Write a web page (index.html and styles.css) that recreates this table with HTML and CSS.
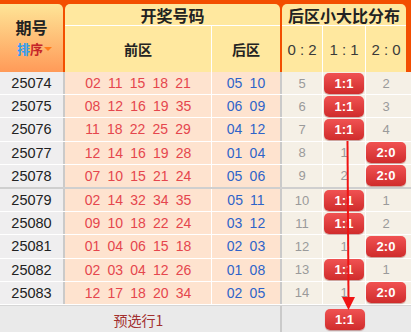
FILE: index.html
```html
<!DOCTYPE html>
<html lang="zh-CN">
<head>
<meta charset="utf-8">
<title>后区小大比分布</title>
<link rel="stylesheet" href="styles.css">
</head>
<body>
<div class="board">
  <div class="head">
    <div class="h-issue">
      <div class="h-issue-title">期号</div>
      <div class="sort"><span class="s-blue">排</span><span class="s-red">序</span><span class="tri"></span></div>
    </div>
    <div class="h-group g-draw">
      <div class="h-title">开奖号码</div>
      <div class="h-sub">
        <div class="h-front">前区</div>
        <div class="h-back">后区</div>
      </div>
    </div>
    <div class="h-group g-dist">
      <div class="h-title">后区小大比分布</div>
      <div class="h-sub">
        <div class="h-d1">0 : 2</div>
        <div class="h-d2">1 : 1</div>
        <div class="h-d3">2 : 0</div>
      </div>
    </div>
  </div>

  <div class="row">
    <div class="c-issue">25074</div>
    <div class="c-front"><span>02</span><span>11</span><span>15</span><span>18</span><span>21</span></div>
    <div class="c-back"><span>05</span><span>10</span></div>
    <div class="c-d1">5</div>
    <div class="c-d2"><span class="badge">1:1</span></div>
    <div class="c-d3">2</div>
  </div>
  <div class="row">
    <div class="c-issue">25075</div>
    <div class="c-front"><span>08</span><span>12</span><span>16</span><span>19</span><span>35</span></div>
    <div class="c-back"><span>06</span><span>09</span></div>
    <div class="c-d1">6</div>
    <div class="c-d2"><span class="badge">1:1</span></div>
    <div class="c-d3">3</div>
  </div>
  <div class="row">
    <div class="c-issue">25076</div>
    <div class="c-front"><span>11</span><span>18</span><span>22</span><span>25</span><span>29</span></div>
    <div class="c-back"><span>04</span><span>12</span></div>
    <div class="c-d1">7</div>
    <div class="c-d2"><span class="badge">1:1</span></div>
    <div class="c-d3">4</div>
  </div>
  <div class="row">
    <div class="c-issue">25077</div>
    <div class="c-front"><span>12</span><span>14</span><span>16</span><span>19</span><span>28</span></div>
    <div class="c-back"><span>01</span><span>04</span></div>
    <div class="c-d1">8</div>
    <div class="c-d2">1</div>
    <div class="c-d3"><span class="badge">2:0</span></div>
  </div>
  <div class="row row-split">
    <div class="c-issue">25078</div>
    <div class="c-front"><span>07</span><span>10</span><span>15</span><span>21</span><span>24</span></div>
    <div class="c-back"><span>05</span><span>06</span></div>
    <div class="c-d1">9</div>
    <div class="c-d2">2</div>
    <div class="c-d3"><span class="badge">2:0</span></div>
  </div>
  <div class="row">
    <div class="c-issue">25079</div>
    <div class="c-front"><span>02</span><span>14</span><span>32</span><span>34</span><span>35</span></div>
    <div class="c-back"><span>05</span><span>11</span></div>
    <div class="c-d1">10</div>
    <div class="c-d2"><span class="badge">1:1</span></div>
    <div class="c-d3">1</div>
  </div>
  <div class="row">
    <div class="c-issue">25080</div>
    <div class="c-front"><span>09</span><span>10</span><span>18</span><span>22</span><span>24</span></div>
    <div class="c-back"><span>03</span><span>12</span></div>
    <div class="c-d1">11</div>
    <div class="c-d2"><span class="badge">1:1</span></div>
    <div class="c-d3">2</div>
  </div>
  <div class="row">
    <div class="c-issue">25081</div>
    <div class="c-front"><span>01</span><span>04</span><span>06</span><span>15</span><span>18</span></div>
    <div class="c-back"><span>02</span><span>03</span></div>
    <div class="c-d1">12</div>
    <div class="c-d2">1</div>
    <div class="c-d3"><span class="badge">2:0</span></div>
  </div>
  <div class="row">
    <div class="c-issue">25082</div>
    <div class="c-front"><span>02</span><span>03</span><span>04</span><span>12</span><span>26</span></div>
    <div class="c-back"><span>01</span><span>08</span></div>
    <div class="c-d1">13</div>
    <div class="c-d2"><span class="badge">1:1</span></div>
    <div class="c-d3">1</div>
  </div>
  <div class="row row-last">
    <div class="c-issue">25083</div>
    <div class="c-front"><span>12</span><span>17</span><span>18</span><span>20</span><span>34</span></div>
    <div class="c-back"><span>02</span><span>05</span></div>
    <div class="c-d1">14</div>
    <div class="c-d2">1</div>
    <div class="c-d3"><span class="badge">2:0</span></div>
  </div>

  <div class="foot">
    <div class="f-issue"></div>
    <div class="f-front">预选行1</div>
    <div class="f-back"></div>
    <div class="f-d1"></div>
    <div class="f-d2"><span class="badge">1:1</span></div>
    <div class="f-d3"></div>
  </div>

  <svg class="trend" width="411" height="332" viewBox="0 0 411 332">
    <line x1="347.5" y1="141" x2="348.5" y2="300" stroke="#f01414" stroke-width="2"/>
    <polygon points="342,297 355,297 348.5,310" fill="#f01414"/>
  </svg>
</div>
</body>
</html>
```

FILE: styles.css
```css
* { box-sizing: border-box; }

html, body {
  margin: 0;
  padding: 0;
  background: #eaeaea;
}

body {
  font-family: "Liberation Sans", Arial, "Noto Sans CJK SC", sans-serif;
  width: 411px;
  height: 332px;
  overflow: hidden;
}

.board {
  position: relative;
  width: 411px;
}

/* ---------- header ---------- */
.head {
  display: flex;
  gap: 2px;
  height: 72px;
  padding: 4px 5px 0 0;
  background: #f34e00;
}

.h-issue {
  width: 63px;
  border-radius: 0 5px 0 0;
  background: linear-gradient(#fee597, #ff9a58);
  display: flex;
  flex-direction: column;
  align-items: center;
  justify-content: flex-start;
  padding-top: 11px;
  font-family: "Noto Sans CJK SC", sans-serif;
  font-weight: bold;
}

.h-issue-title {
  font-size: 16px;
  line-height: 24px;
  height: 24px;
  color: #222;
}

.sort {
  display: flex;
  align-items: center;
  height: 20px;
  font-size: 13px;
  line-height: 20px;
  padding-left: 6px;
}

.s-blue { color: #2c9cf2; }
.s-red { color: #c52429; }

.tri {
  width: 0;
  height: 0;
  margin-left: 1px;
  border-left: 4px solid transparent;
  border-right: 4px solid transparent;
  border-top: 4px solid #ff7a1a;
}

.h-group {
  display: flex;
  flex-direction: column;
  border-radius: 5px 5px 0 0;
  background: #ffe89f;
  overflow: hidden;
}

.g-draw { width: 215px; }
.g-dist { width: 124px; }

.h-title {
  height: 22px;
  border-bottom: 1px solid #fff;
  display: flex;
  align-items: center;
  justify-content: center;
  font-family: "Noto Sans CJK SC", sans-serif;
  font-weight: bold;
  font-size: 16px;
  color: #222;
}

.h-sub {
  flex: 1;
  display: flex;
}

.h-sub > div {
  display: flex;
  align-items: center;
  justify-content: center;
}

.h-front, .h-back {
  font-family: "Noto Sans CJK SC", sans-serif;
  font-weight: bold;
  font-size: 14px;
  color: #222;
}

.h-front { width: 147px; border-right: 1px solid #fff; }
.h-back { flex: 1; }

.h-d1, .h-d2, .h-d3 {
  font-size: 15px;
  color: #3a3a3a;
  white-space: pre;
}

.h-d1 { width: 41px; border-right: 1px solid #fff; }
.h-d2 { width: 43px; border-right: 1px solid #fff; }
.h-d3 { flex: 1; }

/* ---------- body rows ---------- */
.row, .foot {
  display: grid;
  grid-template-columns: 65px 147px 70px 41px 43px 45px;
}

.row {
  height: 23.2px;
  border-bottom: 1px solid #fff;
}

.row-split {
  height: 24.2px;
  border-bottom: 2px solid #cfcfcf;
}

.row > div {
  display: flex;
  align-items: center;
  justify-content: center;
}

.c-issue {
  background: #efeeef;
  border-right: 2px solid #cacaca;
  font-size: 14.5px;
  color: #222;
}

.c-front {
  background: #fee3cf;
  border-right: 1px solid #fff;
  font-size: 14px;
  color: #e5464d;
}

.c-back {
  background: #fee3cf;
  border-right: 2px solid #cacaca;
  font-size: 14px;
  color: #2f63c9;
}

.c-front span, .c-back span {
  margin: 0 3.6px;
}

.c-d1, .c-d2, .c-d3 {
  background: #f5f0e6;
  font-size: 13px;
  color: #9a9a9a;
}

.c-d1, .c-d2 { border-right: 1px solid #fff; }
.c-d3 { padding-right: 5px; }

.badge {
  display: flex;
  align-items: center;
  justify-content: center;
  width: 40px;
  height: 21px;
  border-radius: 5px;
  background: linear-gradient(#f05252, #d02c2c);
  box-shadow: 0 1px 1px rgba(120, 0, 0, 0.35);
  color: #fff;
  font-size: 13px;
  font-weight: bold;
}

/* ---------- footer ---------- */
.foot {
  height: 29px;
  border-top: 1px solid #d6d6d6;
  background: #eaeaea;
}

.foot > div {
  display: flex;
  align-items: center;
  justify-content: center;
}

.f-front {
  font-family: "Noto Sans CJK SC", sans-serif;
  font-size: 14px;
  color: #a3302f;
}

.f-back { border-right: 2px solid #cacaca; }
.f-d3 { padding-right: 5px; }

/* ---------- trend arrow overlay ---------- */
.trend {
  position: absolute;
  left: 0;
  top: 0;
  pointer-events: none;
}
```
